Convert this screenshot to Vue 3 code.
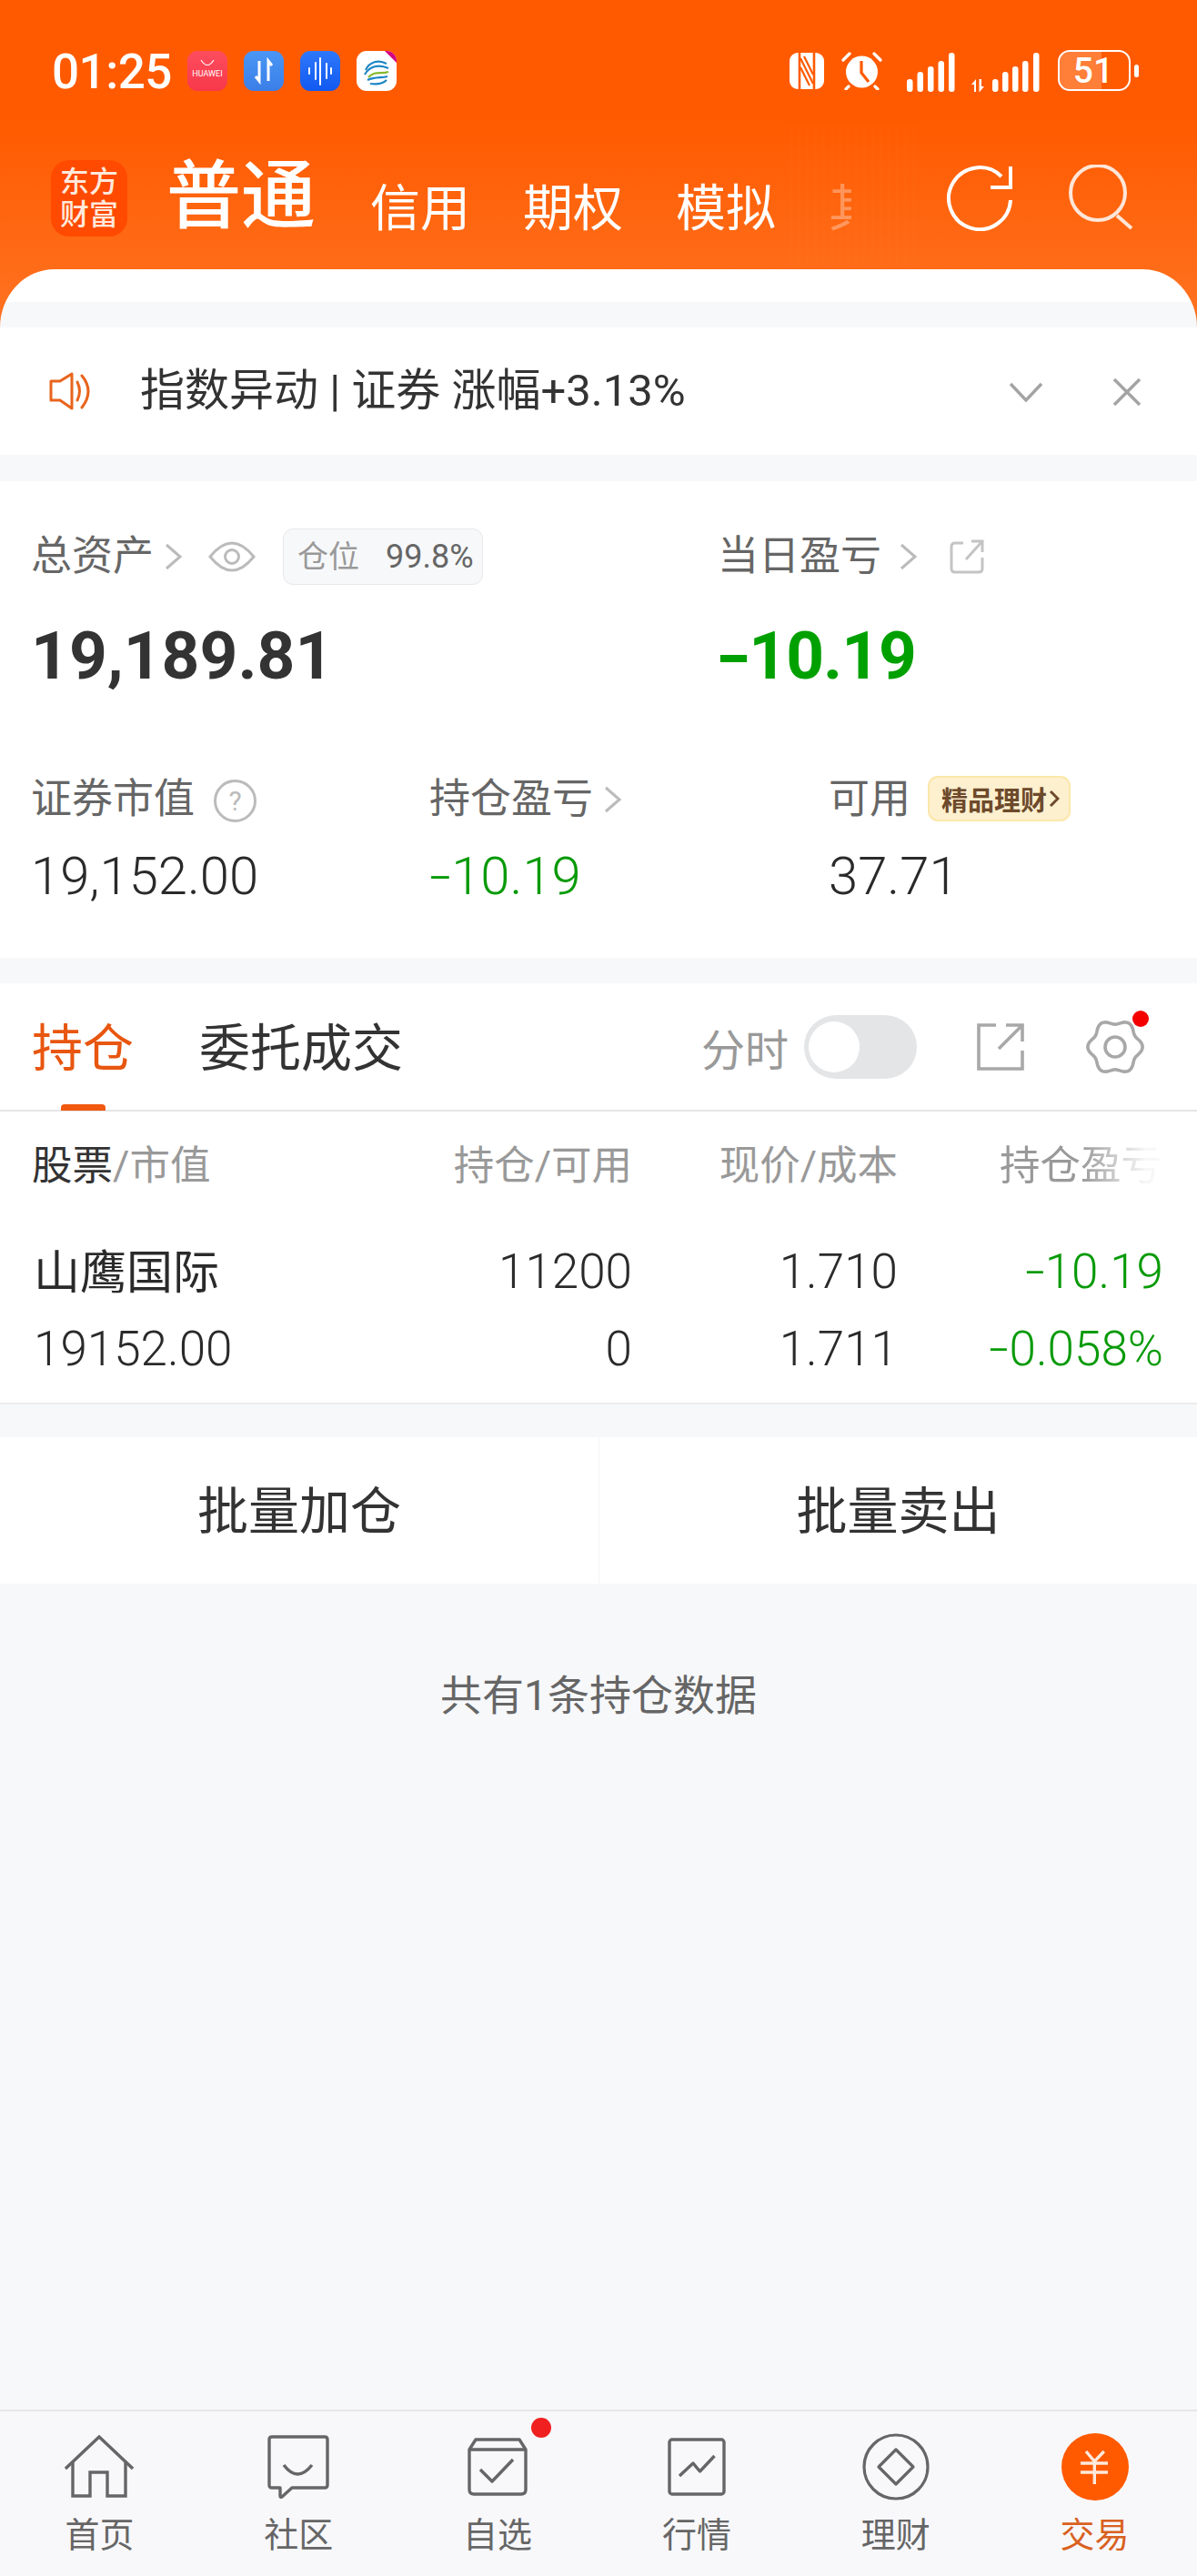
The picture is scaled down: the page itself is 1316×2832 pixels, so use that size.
<script setup>
const gearPath = (() => {
  const pts = []
  for (let i = 0; i < 120; i++) {
    const a = (i / 120) * Math.PI * 2
    const r = 27.5 + 2.6 * Math.cos(6 * a)
    pts.push(`${(32 + r * Math.cos(a)).toFixed(2)} ${(32 + r * Math.sin(a)).toFixed(2)}`)
  }
  return 'M' + pts.join('L') + 'Z'
})()
const rows = [
  ['山鹰国际', '11200', '1.710', '10.19'],
  ['19152.00', '0', '1.711', '0.058%']
]
</script>

<template>
  <div class="page">
    <div class="top">
      <div class="status">
        <span class="time">01:25</span>
        <span class="app huawei">
          <svg class="smile" width="18" height="9" viewBox="0 0 18 9"><path d="M2 1Q9 12 16 1" fill="none" stroke="#fff" stroke-width="1.2"/></svg>
          <span class="hw">HUAWEI</span>
        </span>
        <span class="app blue1">
          <svg width="44" height="44" viewBox="0 0 44 44" fill="none" stroke="#fff" stroke-width="3"><path d="M17 11V33L13 28"/><path d="M27 33V11L31 16"/></svg>
        </span>
        <span class="app blue2">
          <svg width="44" height="44" viewBox="0 0 44 44" fill="none" stroke="#fff" stroke-width="2" stroke-linecap="round"><path d="M10 19V25M17 13V31M22 8V37M29 14V30M34 19V25"/></svg>
        </span>
        <span class="app mobile">
          <svg width="44" height="44" viewBox="0 0 44 44" fill="none" stroke-width="2.2">
            <path d="M10 21C14 12 24 9 33 14" stroke="#1d86c6"/>
            <path d="M9 26C14 17 24 14 35 19" stroke="#1d86c6"/>
            <path d="M13 29C20 21 27 26 35 23" stroke="#86b92e"/>
            <path d="M12 32C20 28 28 30 34 28" stroke="#1d86c6"/>
            <path d="M15 36C22 37 29 36 33 32" stroke="#1d86c6"/>
            <path d="M31 0H44V13Z" fill="#d5007f" stroke="none"/>
          </svg>
        </span>
        <span class="sys">
          <svg class="nfc" width="38" height="40" viewBox="0 0 38 40">
            <rect width="38" height="40" rx="9" fill="#fff"/>
            <path d="M11 0V40M27 0V40" stroke="#ff5a00" stroke-width="2.6"/>
            <path d="M12 6L26 34M12 16L22 36M16 4L26 24" stroke="#ff5a00" stroke-width="2.2" fill="none"/>
          </svg>
          <svg class="alarm" width="45" height="42" viewBox="0 0 45 42">
            <circle cx="22.5" cy="22" r="17.5" fill="#fff"/>
            <path d="M22 10V23L30 33" stroke="#ff5a00" stroke-width="3.2" fill="none"/>
            <path d="M2 9L9 2M43 9L36 2M8 38L5 41M37 38L40 41" stroke="#fff" stroke-width="3.2" stroke-linecap="round"/>
          </svg>
          <svg class="sig1" width="53" height="43" viewBox="0 0 53 43" fill="#fff">
            <rect x="0" y="29" width="6.5" height="14" rx="3"/><rect x="11.5" y="21" width="6.5" height="22" rx="3"/><rect x="23" y="15" width="6.5" height="28" rx="3"/><rect x="34.5" y="9" width="6.5" height="34" rx="3"/><rect x="46" y="0" width="6.5" height="43" rx="3"/>
          </svg>
          <svg class="sig2" width="75" height="43" viewBox="0 0 75 43" fill="#fff">
            <path d="M0 35L5 29V43H3V35ZM9 43L14 37H11V29H8.5V43Z"/>
            <rect x="23" y="29" width="6.5" height="14" rx="3"/><rect x="34" y="21" width="6.5" height="22" rx="3"/><rect x="45" y="15" width="6.5" height="28" rx="3"/><rect x="56" y="9" width="6.5" height="34" rx="3"/><rect x="68" y="0" width="6.5" height="43" rx="3"/>
          </svg>
          <span class="battery"><i class="fill"></i><b>51</b></span>
          <i class="nub"></i>
        </span>
      </div>

      <div class="head">
        <div class="logo"><span>东方</span><span>财富</span></div>
        <span class="main-tab">普通</span>
        <span class="tab first">信用</span>
        <span class="tab">期权</span>
        <span class="tab">模拟</span>
        <span class="tab fade">其</span>
        <svg class="refresh" width="72" height="72" viewBox="0 0 72 72" fill="none" stroke="#fff" stroke-width="4"><path d="M70 38A34 34 0 1 1 60 12"/><path d="M70 1V24H48"/></svg>
        <svg class="search" width="72" height="72" viewBox="0 0 72 72" fill="none" stroke="#ffe6d8" stroke-width="4"><circle cx="33" cy="31" r="30"/><path d="M54 56L70 70"/></svg>
      </div>
      <i class="glitch"></i>
      <div class="sheet"></div>
    </div>

    <div class="banner">
      <svg class="speaker" width="46" height="42" viewBox="0 0 46 42" fill="none" stroke="#e8641c" stroke-width="3" stroke-linejoin="round" stroke-linecap="round"><path d="M2 10H12L25 2V40L12 31H2Z"/><path d="M31 11Q36 21 31 31"/><path d="M36 4Q50 21 36 39"/></svg>
      <span class="banner-text">指数异动 | 证券 涨幅+3.13%</span>
      <svg class="b-down" width="36" height="22" viewBox="0 0 36 22" fill="none" stroke="#a3a3a3" stroke-width="3.4"><path d="M1 2L18 20L35 2"/></svg>
      <svg class="b-close" width="32" height="32" viewBox="0 0 32 32" fill="none" stroke="#a3a3a3" stroke-width="3.4"><path d="M2 2L30 30M30 2L2 30"/></svg>
    </div>

    <section class="stats">
      <div class="row-a">
        <div>
          <div class="label-line">
            <span class="label">总资产</span>
            <svg class="chev" width="20" height="30" viewBox="0 0 20 30"><path d="M2 2L17 15L2 28" fill="none" stroke="#bbb" stroke-width="3"/></svg>
            <svg class="eye" width="52" height="36" viewBox="0 0 52 36" fill="none" stroke="#bbb" stroke-width="3"><path d="M2 18Q26 -12 50 18Q26 48 2 18Z"/><circle cx="26" cy="18" r="7.5"/></svg>
            <span class="pos"><em>仓位</em><span>99.8%</span></span>
          </div>
          <div class="big">19,189.81</div>
        </div>
        <div>
          <div class="label-line">
            <span class="label">当日盈亏</span>
            <svg class="chev c2" width="20" height="30" viewBox="0 0 20 30"><path d="M2 2L17 15L2 28" fill="none" stroke="#bbb" stroke-width="3"/></svg>
            <svg class="ext" width="38" height="38" viewBox="0 0 38 38" fill="none" stroke="#c4c4c4" stroke-width="3"><path d="M15 4H6Q2 4 2 8V32Q2 36 6 36H32Q36 36 36 32V20"/><path d="M24 2H36V14M36 2L18 22"/></svg>
          </div>
          <div class="big green"><span class="minus tight">-</span>10.19</div>
        </div>
      </div>
      <div class="row-b">
        <div>
          <div class="label-line short">
            <span class="label">证券市值</span>
            <span class="help">?</span>
          </div>
          <div class="mid">19,152.00</div>
        </div>
        <div>
          <div class="label-line short">
            <span class="label">持仓盈亏</span>
            <svg class="chev" width="20" height="30" viewBox="0 0 20 30"><path d="M2 2L17 15L2 28" fill="none" stroke="#bbb" stroke-width="3"/></svg>
          </div>
          <div class="mid green2"><span class="minus">-</span>10.19</div>
        </div>
        <div>
          <div class="label-line short">
            <span class="label">可用</span>
            <span class="gold">精品理财<svg width="12" height="20" viewBox="0 0 12 20"><path d="M2 2L10 10L2 18" fill="none" stroke="#6d4a2b" stroke-width="3"/></svg></span>
          </div>
          <div class="mid">37.71</div>
        </div>
      </div>
    </section>

    <section class="holdings">
      <div class="tabs">
        <span class="t active">持仓</span>
        <span class="t second">委托成交</span>
        <span class="split">分时</span>
        <span class="toggle"><i></i></span>
        <svg class="t-share" width="52" height="52" viewBox="0 0 52 52" fill="none" stroke="#a8a8a8" stroke-width="3.6"><path d="M21 2H2V50H50V30"/><path d="M32 2H50V20M50 2L24 28"/></svg>
        <span class="gear">
          <svg width="64" height="64" viewBox="0 0 64 64" fill="none" stroke="#a8a8a8" stroke-width="3.6"><path :d="gearPath"/><circle cx="32" cy="32" r="11"/></svg>
          <i></i>
        </span>
      </div>
      <div class="table">
        <div class="thead">
          <span><b>股票</b>/市值</span>
          <span class="r">持仓/可用</span>
          <span class="r">现价/成本</span>
          <span class="r"><span class="fadeout">持仓盈亏</span></span>
        </div>
        <div v-for="(row, i) in rows" :key="i" class="tr">
          <span :class="i === 0 ? 'name' : ''">{{ row[0] }}</span>
          <span class="r">{{ row[1] }}</span>
          <span class="r">{{ row[2] }}</span>
          <span class="r green2"><span class="minus">-</span>{{ row[3] }}</span>
        </div>
      </div>
    </section>

    <div class="actions">
      <span>批量加仓</span>
      <span class="right">批量卖出</span>
    </div>

    <div class="count">共有1条持仓数据</div>

    <nav class="nav">
      <div class="item">
        <span class="ico"><svg width="76" height="70" viewBox="0 0 76 70" fill="none" stroke="#666" stroke-width="3.4"><path d="M1 37L38 2L75 37"/><path d="M9 29V67H28V41H47V67H67V29"/></svg></span>
        <span>首页</span>
      </div>
      <div class="item">
        <span class="ico"><svg width="68" height="70" viewBox="0 0 68 70" fill="none" stroke="#666" stroke-width="3.4" stroke-linejoin="round"><path d="M5 2H63Q66 2 66 5V55Q66 58 63 58H27L16 68Q14 69 14 67V58H5Q2 58 2 55V5Q2 2 5 2Z"/><path d="M18 33Q33 53 49 33"/></svg></span>
        <span>社区</span>
      </div>
      <div class="item">
        <span class="ico"><svg width="66" height="64" viewBox="0 0 66 64" fill="none" stroke="#666" stroke-width="3.4" stroke-linejoin="round"><path d="M2 13L9 2H57L64 13V57Q64 62 59 62H7Q2 62 2 57Z"/><path d="M2 13H64"/><path d="M14 35L27 48L50 24"/></svg><i class="dot"></i></span>
        <span>自选</span>
      </div>
      <div class="item">
        <span class="ico"><svg width="64" height="64" viewBox="0 0 64 64" fill="none" stroke="#666" stroke-width="3.4" stroke-linejoin="round"><rect x="2" y="2" width="60" height="60" rx="3"/><path d="M13 42L28 28L35.5 37L51.5 20"/></svg></span>
        <span>行情</span>
      </div>
      <div class="item">
        <span class="ico"><svg width="74" height="74" viewBox="0 0 74 74" fill="none" stroke="#666" stroke-width="3.2" stroke-linejoin="round"><circle cx="37" cy="37" r="35"/><path d="M37 18L56 37L37 56L18 37Z"/></svg></span>
        <span>理财</span>
      </div>
      <div class="item on">
        <span class="ico"><svg width="74" height="74" viewBox="0 0 74 74" fill="none"><circle cx="37" cy="37" r="37" fill="#ff5a00"/><path d="M27 20L36.3 31L46.8 20M36.3 31V56M21 33H51M21 43H51" stroke="#ffe9dc" stroke-width="3.4"/></svg></span>
        <span>交易</span>
      </div>
    </nav>
  </div>
</template>

<style>
html, body { margin: 0; padding: 0; }
</style>

<style scoped>
.page {
  width: 1316px;
  height: 2832px;
  display: flex;
  flex-direction: column;
  background: #f7f8fa;
  font-family: Roboto, "Noto Sans CJK SC", sans-serif;
  color: #333;
  overflow: hidden;
}
i, em { font-style: normal; display: block; }

.minus {
  display: inline-block;
  transform: scaleX(1.45);
  transform-origin: left center;
  margin-right: 0.13em;
}
.minus.tight { margin-left: -3px; margin-right: 0.13em; }

.top {
  position: relative;
  height: 360px;
  background: linear-gradient(#ff5a00 0, #ff5a00 130px, #ff7322 360px);
  padding-top: 55px;
  box-sizing: border-box;
}
.status {
  display: flex;
  align-items: center;
  height: 45px;
  padding-left: 57px;
  color: #fff;
}
.time {
  font-size: 53px;
  line-height: 45px;
  font-weight: 500;
  width: 149px;
  margin-top: 3px;
  letter-spacing: -0.5px;
}
.app {
  width: 44px;
  height: 44px;
  border-radius: 11px;
  margin-right: 18px;
  display: flex;
  flex-direction: column;
  align-items: center;
  overflow: hidden;
}
.huawei { background: linear-gradient(#fc4d5e, #f8384a); }
.smile { margin-top: 9px; }
.hw { font-size: 9px; line-height: 11px; color: #fff; margin-top: 2px; }
.blue1 { background: linear-gradient(#4a96f5, #3a7fe8); }
.blue2 { background: linear-gradient(#2f78fb, #1159f0); }
.mobile { background: #fff; }
.sys {
  display: flex;
  align-items: center;
  margin-left: 414px;
}
.alarm { margin-left: 19px; }
.sig1 { margin-left: 27px; margin-top: 3px; }
.sig2 { margin-left: 18px; margin-top: 3px; }
.battery {
  position: relative;
  width: 80px;
  height: 45px;
  box-sizing: border-box;
  border: 2.5px solid #fff;
  border-radius: 13px;
  margin-left: 20px;
  overflow: hidden;
  display: flex;
  align-items: center;
  justify-content: center;
}
.fill {
  position: absolute;
  left: 0; top: 0; bottom: 0;
  width: 46px;
  background: rgba(255, 255, 255, 0.22);
}
.battery b {
  position: relative;
  font-size: 39px;
  line-height: 40px;
  font-weight: 500;
  margin-right: 2px;
}
.nub {
  width: 5px;
  height: 14px;
  border-radius: 3px;
  background: #fff;
  margin-left: 4px;
}

.head {
  display: flex;
  align-items: flex-end;
  height: 85px;
  margin-top: 75px;
  padding-left: 56px;
  color: #fff;
  position: relative;
}
.logo {
  width: 84px;
  height: 84px;
  border-radius: 20px;
  background: #ff4a00;
  display: flex;
  flex-direction: column;
  align-items: center;
  justify-content: center;
  font-size: 32px;
  line-height: 36px;
  font-weight: 500;
  color: #ffe9dc;
}
.main-tab {
  font-size: 82px;
  line-height: 82px;
  font-weight: 500;
  margin-left: 43px;
  margin-bottom: 3px;
}
.tab {
  font-size: 55px;
  line-height: 55px;
  margin-left: 58px;
  margin-bottom: 3px;
  white-space: nowrap;
}
.first { margin-left: 60px; }
.fade {
  opacity: 0.32;
  -webkit-mask-image: linear-gradient(90deg, #000 46%, transparent 46%);
  mask-image: linear-gradient(90deg, #000 46%, transparent 46%);
}
.refresh { position: absolute; left: 1041px; top: 7px; }
.search { position: absolute; left: 1174px; top: 6px; }
.glitch {
  position: absolute;
  left: 868px;
  top: 138px;
  width: 144px;
  height: 155px;
  background: repeating-linear-gradient(90deg, rgba(255, 255, 255, 0.012) 0 3px, transparent 3px 9px);
  pointer-events: none;
}
.sheet {
  position: absolute;
  left: 0;
  right: 0;
  top: 296px;
  height: 64px;
  border-radius: 60px 60px 0 0 / 64px 64px 0 0;
  background: linear-gradient(#fff 36px, #f7f8fa 36px);
}

.banner {
  height: 140px;
  background: #fff;
  display: flex;
  align-items: center;
  padding-left: 54px;
  position: relative;
}
.banner-text {
  font-size: 49px;
  line-height: 60px;
  margin-left: 54px;
  margin-bottom: 1px;
  color: #333;
  white-space: nowrap;
}
.b-down { position: absolute; left: 1110px; top: 60px; }
.b-close { position: absolute; left: 1223px; top: 55px; }

.stats {
  margin-top: 29px;
  background: #fff;
  height: 524px;
  box-sizing: border-box;
  padding: 52px 0 0 34px;
}
.row-a { display: grid; grid-template-columns: 755px 1fr; }
.row-b { display: grid; grid-template-columns: 438px 439px 1fr; margin-top: 88px; }
.label-line { display: flex; align-items: center; height: 62px; }
.label-line.short { height: 60px; }
.label { font-size: 45px; line-height: 60px; color: #666; white-space: nowrap; }
.chev { margin-left: 12px; flex: none; }
.c2 { margin-left: 20px; }
.eye { margin-left: 28px; }
.ext { margin-left: 35px; }
.pos {
  margin-left: 30px;
  width: 220px;
  height: 62px;
  box-sizing: border-box;
  background: #f7f8fa;
  border: 1px solid #e8e8ea;
  border-radius: 11px;
  display: flex;
  align-items: center;
  padding-left: 15px;
  font-size: 36px;
  color: #666;
}
.pos em { color: #999; font-size: 34px; width: 97px; margin-top: -5px; }
.big {
  margin-top: 38px;
  font-size: 73px;
  line-height: 80px;
  font-weight: 700;
  color: #333;
}
.big.green { letter-spacing: -1px; }
.green { color: #00a000; }
.green2 { color: #089a08; }
.mid {
  margin-top: 24px;
  font-size: 58px;
  line-height: 60px;
  font-weight: 300;
  color: #2a2a2a;
}
.mid.green2 { color: #089a08; }
.help {
  width: 41px;
  height: 41px;
  border: 3px solid #bbb;
  border-radius: 50%;
  margin-left: 21px;
  margin-top: 3px;
  display: flex;
  align-items: center;
  justify-content: center;
  font-size: 30px;
  color: #bbb;
  line-height: 1;
}
.gold {
  margin-left: 19px;
  margin-top: -2px;
  width: 157px;
  height: 50px;
  box-sizing: border-box;
  display: flex;
  align-items: center;
  gap: 2px;
  padding-left: 13px;
  border-radius: 11px;
  background: #fdf0cf;
  border: 2px solid #fbe7aa;
  color: #6d4a2b;
  font-size: 29px;
  font-weight: 700;
  white-space: nowrap;
}

.holdings {
  margin-top: 28px;
  background: #fff;
  height: 463px;
  box-sizing: border-box;
  border-bottom: 2px solid #ececec;
}
.tabs {
  position: relative;
  display: flex;
  align-items: center;
  height: 141px;
  padding-left: 35px;
  box-sizing: border-box;
  border-bottom: 2px solid #e6e6e6;
}
.t { font-size: 56px; line-height: 60px; color: #333; white-space: nowrap; margin-top: 5px; }
.t.active { color: #e8560f; }
.t.active::after {
  content: "";
  position: absolute;
  left: 67px;
  bottom: -1px;
  width: 49px;
  height: 7px;
  border-radius: 4px 4px 0 0;
  background: #f0590f;
}
.second { margin-left: 72px; }
.split { font-size: 48px; color: #999; margin-left: auto; white-space: nowrap; }
.toggle {
  width: 124px;
  height: 70px;
  border-radius: 35px;
  background: #e4e5e7;
  margin-left: 17px;
  display: flex;
  align-items: center;
  padding-left: 5px;
  box-sizing: border-box;
}
.toggle i { width: 56px; height: 56px; border-radius: 50%; background: #fff; }
.t-share { margin-left: 66px; }
.gear { position: relative; display: block; width: 64px; height: 64px; margin-left: 68px; margin-right: 58px; }
.gear i {
  position: absolute;
  right: -5px;
  top: -8px;
  width: 18px;
  height: 18px;
  border-radius: 50%;
  background: #f40000;
}
.table { padding-left: 35px; }
.thead, .tr {
  display: grid;
  align-items: center;
}
.thead {
  grid-template-columns: 342px 318px 292px 290px;
  height: 110px;
  font-size: 44.5px;
  color: #999;
  margin-bottom: 23px;
}
.thead b { font-weight: 400; color: #333; }
.tr {
  height: 85px;
  font-size: 53px;
  font-weight: 300;
  color: #2a2a2a;
  padding-left: 2px;
  grid-template-columns: 340px 318px 292px 292px;
}
.name { font-size: 51px; font-weight: 400; margin-bottom: 6px; }
.r { text-align: right; white-space: nowrap; }
.fadeout {
  -webkit-mask-image: linear-gradient(90deg, #000 50%, rgba(0, 0, 0, 0.08) 90%);
  mask-image: linear-gradient(90deg, #000 50%, rgba(0, 0, 0, 0.08) 90%);
  display: inline-block;
}

.actions {
  margin-top: 36px;
  height: 161px;
  background: #fff;
  display: grid;
  grid-template-columns: 658px 658px;
  text-align: center;
  font-size: 56px;
  color: #333;
}
.actions span { padding-top: 4px; line-height: 157px; box-sizing: border-box; }
.actions .right { border-left: 1px solid #f4f4f4; }
.count {
  margin-top: 93px;
  text-align: center;
  font-size: 46px;
  line-height: 60px;
  color: #666;
}

.nav {
  margin-top: auto;
  height: 183px;
  box-sizing: border-box;
  border-top: 2px solid #e6e6e8;
  background: #f8f8fb;
  display: grid;
  grid-template-columns: repeat(6, 1fr);
  padding-right: 3px;
}
.item {
  display: flex;
  flex-direction: column;
  align-items: center;
  padding-top: 24px;
  font-size: 38px;
  line-height: 40px;
  color: #666;
}
.ico {
  position: relative;
  height: 73px;
  margin-bottom: 19px;
  display: flex;
  align-items: center;
  justify-content: center;
}
.dot {
  position: absolute;
  left: 70px;
  top: -17px;
  width: 22px;
  height: 22px;
  border-radius: 50%;
  background: #f02020;
}
.on { color: #d9611f; }
</style>
